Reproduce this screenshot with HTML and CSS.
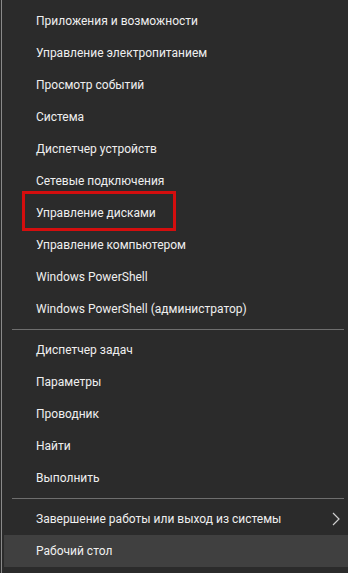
FILE: index.html
```html
<!DOCTYPE html>
<html lang="ru">
<head>
    <meta charset="UTF-8">
    <meta name="viewport" content="width=device-width, initial-scale=1.0">
    <title>Меню Win+X</title>
    <link rel="stylesheet" href="styles.css">
</head>
<body>
    <div class="menu">
        <div class="group">
            <div class="item">Приложения и возможности</div>
            <div class="item">Управление электропитанием</div>
            <div class="item">Просмотр событий</div>
            <div class="item">Система</div>
            <div class="item">Диспетчер устройств</div>
            <div class="item">Сетевые подключения</div>
            <div class="item marked">Управление дисками</div>
            <div class="item">Управление компьютером</div>
            <div class="item">Windows PowerShell</div>
            <div class="item">Windows PowerShell (администратор)</div>
        </div>
        <hr class="sep">
        <div class="group">
            <div class="item">Диспетчер задач</div>
            <div class="item">Параметры</div>
            <div class="item">Проводник</div>
            <div class="item">Найти</div>
            <div class="item">Выполнить</div>
        </div>
        <hr class="sep">
        <div class="group">
            <div class="item sub">
                <span>Завершение работы или выход из системы</span>
                <svg class="chevron" width="8" height="14" viewBox="0 0 8 14">
                    <path d="M1 1 L7 7 L1 13" fill="none" stroke="#cfcfcf" stroke-width="1.2"/>
                </svg>
            </div>
            <div class="item active">Рабочий стол</div>
        </div>
    </div>
</body>
</html>
```

FILE: styles.css
```css
html, body {
    margin: 0;
    padding: 0;
    background: #2b2b2b;
}
body {
    font-family: 'Roboto', 'Noto Sans', sans-serif;
    font-size: 12px;
    color: #efefef;
    width: 348px;
    height: 573px;
    overflow: hidden;
}
.menu {
    border-left: 1px solid #8a8a8a;
    margin-left: 1px;
    padding: 5px 0 0 2px;
    height: 568px;
}
.item {
    position: relative;
    height: 32px;
    line-height: 33px;
    padding-left: 32px;
    white-space: nowrap;
}
.item.sub {
    display: flex;
    justify-content: space-between;
    align-items: center;
    padding-right: 8px;
}
.chevron {
    display: block;
}
.item.active {
    background: #404040;
}
/* red frame drawn over the item */
.item.marked::after {
    content: "";
    position: absolute;
    left: 18px;
    top: -6px;
    width: 148px;
    height: 34px;
    border: 3px solid #d40e0e;
}
.sep {
    border: none;
    border-top: 1px solid #6e6e6e;
    margin: 4px 4px 4px 8px;
    height: 0;
}
```
